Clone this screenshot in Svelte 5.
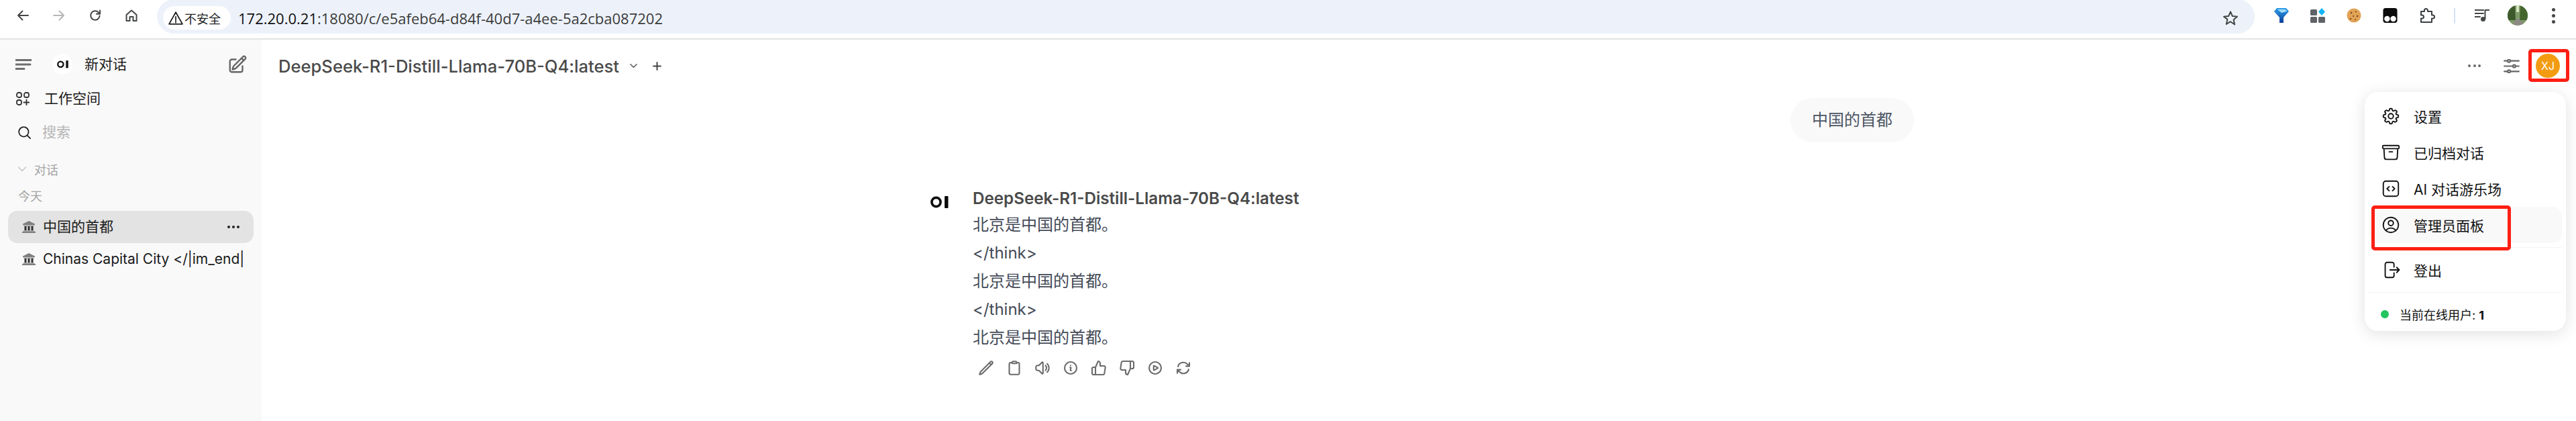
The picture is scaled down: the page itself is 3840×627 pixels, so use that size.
<script>
  const actions = [
    { d: 'M16.862 4.487l1.687-1.688a1.875 1.875 0 112.652 2.652L6.832 19.82a4.5 4.5 0 01-1.897 1.13l-2.685.8.8-2.685a4.5 4.5 0 011.13-1.897L16.863 4.487zm0 0L19.5 7.125' },
    { d: 'M15.666 3.888A2.25 2.25 0 0013.5 2.25h-3c-1.03 0-1.9.693-2.166 1.638m7.332 0c.055.194.084.4.084.612v0a.75.75 0 01-.75.75H9a.75.75 0 01-.75-.75v0c0-.212.03-.418.084-.612m7.332 0c.646.049 1.288.11 1.927.184 1.1.128 1.907 1.077 1.907 2.185V19.5a2.25 2.25 0 01-2.25 2.25H6.75A2.25 2.25 0 014.5 19.5V6.257c0-1.108.806-2.057 1.907-2.185a48.208 48.208 0 011.927-.184' },
    { d: 'M19.114 5.636a9 9 0 010 12.728M16.463 8.288a5.25 5.25 0 010 7.424M6.75 8.25l4.72-4.72a.75.75 0 011.28.53v15.88a.75.75 0 01-1.28.53l-4.72-4.72H4.51c-.88 0-1.704-.507-1.938-1.354A9.01 9.01 0 012.25 12c0-.83.112-1.633.322-2.396C2.806 8.756 3.63 8.25 4.51 8.25H6.75z' },
    { d: 'M11.25 11.25l.041-.02a.75.75 0 011.063.852l-.708 2.836a.75.75 0 001.063.853l.041-.021M21 12a9 9 0 11-18 0 9 9 0 0118 0zm-9-3.75h.008v.008H12V8.25z' },
    { d: 'M14 9V5a3 3 0 0 0-3-3l-4 9v11h11.28a2 2 0 0 0 2-1.7l1.38-9a2 2 0 0 0-2-2.3zM7 22H4a2 2 0 0 1-2-2v-7a2 2 0 0 1 2-2h3' },
    { d: 'M10 15v4a3 3 0 0 0 3 3l4-9V2H5.72a2 2 0 0 0-2 1.7l-1.38 9a2 2 0 0 0 2 2.3zm7-13h2.67A2.31 2.31 0 0 1 22 4v7a2.31 2.31 0 0 1-2.33 2H17' },
    { d: 'M21 12a9 9 0 11-18 0 9 9 0 0118 0zM15.91 11.672a.375.375 0 010 .656l-5.603 3.113a.375.375 0 01-.557-.328V8.887c0-.286.307-.466.557-.327l5.603 3.112z' },
    { d: 'M16.023 9.348h4.992v-.001M2.985 19.644v-4.992m0 0h4.992m-4.993 0l3.181 3.183a8.25 8.25 0 0013.803-3.7M4.031 9.865a8.25 8.25 0 0113.803-3.7l3.181 3.182m0-4.991v4.99' }
  ];
  const menu = [
    { label: '设置', d: 'M10.343 3.94c.09-.542.56-.94 1.11-.94h1.093c.55 0 1.02.398 1.11.94l.149.894c.07.424.384.764.78.93.398.164.855.142 1.205-.108l.737-.527a1.125 1.125 0 011.45.12l.773.774c.39.389.44 1.002.12 1.45l-.527.737c-.25.35-.272.806-.107 1.204.165.397.505.71.93.78l.893.15c.543.09.94.56.94 1.109v1.094c0 .55-.397 1.02-.94 1.11l-.893.149c-.425.07-.765.383-.93.78-.165.398-.143.854.107 1.204l.527.738c.32.447.269 1.06-.12 1.45l-.774.773a1.125 1.125 0 01-1.449.12l-.738-.527c-.35-.25-.806-.272-1.203-.107-.397.165-.71.505-.781.929l-.149.894c-.09.542-.56.94-1.11.94h-1.094c-.55 0-1.019-.398-1.11-.94l-.148-.894c-.071-.424-.384-.764-.781-.93-.398-.164-.854-.142-1.204.108l-.738.527c-.447.32-1.06.269-1.45-.12l-.773-.774a1.125 1.125 0 01-.12-1.45l.527-.737c.25-.35.273-.806.108-1.204-.165-.397-.506-.71-.93-.78l-.894-.15c-.542-.09-.94-.56-.94-1.11v-1.094c0-.55.398-1.02.94-1.11l.894-.149c.424-.07.765-.383.93-.78.165-.398.143-.854-.107-1.204l-.527-.738a1.125 1.125 0 01.12-1.45l.773-.773a1.125 1.125 0 011.45-.12l.737.527c.35.25.807.272 1.204.107.397-.165.71-.505.78-.929l.15-.894zM15 12a3 3 0 11-6 0 3 3 0 016 0z' },
    { label: '已归档对话', d: 'M20.25 7.5l-.625 10.632a2.25 2.25 0 01-2.247 2.118H6.622a2.25 2.25 0 01-2.247-2.118L3.75 7.5M10 11.25h4M3.375 7.5h17.25c.621 0 1.125-.504 1.125-1.125v-1.5c0-.621-.504-1.125-1.125-1.125H3.375c-.621 0-1.125.504-1.125 1.125v1.5c0 .621.504 1.125 1.125 1.125z' },
    { label: 'AI 对话游乐场', d: 'M6 3h12a3 3 0 013 3v12a3 3 0 01-3 3H6a3 3 0 01-3-3V6a3 3 0 013-3zM10 9.500l-2.500 2.500 2.500 2.500M14 9.500l2.500 2.500-2.500 2.500' },
    { label: '管理员面板', hover: true, d: 'M17.982 18.725A7.488 7.488 0 0012 15.75a7.488 7.488 0 00-5.982 2.975m11.963 0a9 9 0 10-11.963 0m11.963 0A8.966 8.966 0 0112 21a8.966 8.966 0 01-5.982-2.275M15 9.75a3 3 0 11-6 0 3 3 0 016 0z' }
  ];
  const lines = ['北京是中国的首都。', '</think>', '北京是中国的首都。', '</think>', '北京是中国的首都。'];
  const title = 'DeepSeek-R1-Distill-Llama-70B-Q4:latest';
</script>

{#snippet ologo(size)}
  <svg class="ologo" width={size} viewBox="0 0 27 18" aria-hidden="true">
    <circle cx="8.5" cy="9" r="6.6" fill="none" stroke="currentColor" stroke-width="3.6" />
    <rect x="22" y="0.5" width="4" height="17" fill="currentColor" />
  </svg>
{/snippet}

{#snippet bank()}
  <svg class="bank" viewBox="0 0 20 18" aria-hidden="true">
    <path d="M10 0 L19 4.5 V6 H1 V4.5 Z" fill="#7f7f7f" />
    <rect x="2" y="6.5" width="16" height="1.5" fill="#a0a0a0" />
    <rect x="3.5" y="8" width="3" height="6.5" fill="#2e2e2e" />
    <rect x="8.5" y="8" width="3" height="6.5" fill="#2e2e2e" />
    <rect x="13.5" y="8" width="3" height="6.5" fill="#2e2e2e" />
    <rect x="1.5" y="14.5" width="17" height="1.5" fill="#a0a0a0" />
    <rect x="0" y="16" width="20" height="2" fill="#7f7f7f" />
  </svg>
{/snippet}

<div class="app">
  <header class="chrome">
    <nav class="nav">
      <svg viewBox="0 0 20 20"><path d="M18 10H3M9.5 3.5 3 10l6.5 6.5" /></svg>
      <svg class="off" viewBox="0 0 20 20"><path d="M2 10h15M10.5 3.5 17 10l-6.5 6.5" /></svg>
      <svg viewBox="0 0 20 20"><path d="M16.5 10.5a6.7 6.7 0 1 1-1.9-5.2L17 7.6M17 2.5v5.2h-5.2" /></svg>
      <svg viewBox="0 0 20 20"><path d="M2.5 9 10 2.5 17.5 9v9h-5v-6h-5v6h-5z" /></svg>
    </nav>
    <div class="omni">
      <div class="chip">
        <svg viewBox="0 0 20 20"><path d="M10 2 19 18H1zM10 8v5M10 14.5v1.6" /></svg>
        <span>不安全</span>
      </div>
      <div class="url"><b>172.20.0.21</b>:18080/c/e5afeb64-d84f-40d7-a4ee-5a2cba087202</div>
      <svg class="star" viewBox="0 0 24 24"><path d="M12 2.5l2.9 6.6 7.1.7-5.4 4.7 1.6 7L12 17.2l-6.2 3.7 1.6-7L2 9.800l7.100-.7z" /></svg>
    </div>
    <div class="exts">
      <svg class="ext" viewBox="0 0 22 22">
        <defs><linearGradient id="fnl" x1="0" y1="0" x2="0" y2="1"><stop offset="0" stop-color="#2f9fe8" /><stop offset="1" stop-color="#0a3f9a" /></linearGradient></defs>
        <path d="M4 0h14l4 5-8 9v8h-6v-8L0 5z" fill="url(#fnl)" />
        <path d="M5 2h12l2 3-8 2z" fill="#9fdcf8" />
      </svg>
      <svg class="ext" viewBox="0 0 22 22">
        <rect x="0" y="2" width="10" height="9" rx="1.500" fill="#5f6368" />
        <rect x="0" y="13" width="10" height="9" rx="1.500" fill="#5f6368" />
        <rect x="12" y="13" width="10" height="9" rx="1.500" fill="#5f6368" />
        <path d="M17 0l5 5.500-5 5.500-5-5.500z" fill="#12b5f5" />
      </svg>
      <svg class="ext" viewBox="0 0 22 22">
        <circle cx="11" cy="11" r="10.500" fill="#e2a355" />
        <g fill="#7a4a1c"><circle cx="7" cy="7" r="1.300" /><circle cx="14" cy="5.500" r="1.100" /><circle cx="16" cy="12" r="1.300" /><circle cx="10" cy="12" r="1.100" /><circle cx="6" cy="16" r="1.300" /><circle cx="13" cy="17" r="1.100" /></g>
      </svg>
      <svg class="ext" viewBox="0 0 24 24">
        <rect x="0.500" y="0" width="23" height="24" rx="4" fill="#0b0b0b" />
        <circle cx="7" cy="17.500" r="4.600" fill="#fff" /><circle cx="17" cy="17.500" r="4.600" fill="#fff" />
      </svg>
      <svg class="ext puzzle" viewBox="0 0 24 24">
        <path d="M3 6h5V4.500a2.500 2.500 0 0 1 5 0V6h6v5.500h1.500a2.500 2.500 0 0 1 0 5H19V22H3v-5.500h1.500a2.500 2.500 0 0 0 0-5H3z" />
      </svg>
      <i class="sep"></i>
      <svg class="ext media" viewBox="0 0 22 22">
        <path d="M0 3h13M0 8h13M0 13h8" />
        <path class="note" d="M15.500 3h6M15.500 3v13" />
        <circle cx="12.500" cy="16.500" r="3.500" />
      </svg>
      <svg class="profile" viewBox="0 0 30 30">
        <defs><clipPath id="pc"><circle cx="15" cy="15" r="15" /></clipPath></defs>
        <g clip-path="url(#pc)">
          <rect width="30" height="30" fill="#7f9b6a" />
          <path d="M0 0h11l1 22H0z" fill="#3d5a2c" />
          <path d="M30 0H19l-1 22h12z" fill="#46662f" />
          <path d="M13 0h4v10h-4z" fill="#d6e4c4" />
          <path d="M13 20h4l9 10H6z" fill="#8d8a86" />
        </g>
      </svg>
      <div class="kebab"><i></i><i></i><i></i></div>
    </div>
  </header>

  <main class="main">
    <aside class="side">
      <div class="row top">
        <svg class="menu-ico" viewBox="0 0 24 16"><path d="M0 1.500h24M0 8h22M0 14.500h13" /></svg>
        <div class="logo-c">{@render ologo(17)}</div>
        <span class="t21">新对话</span>
        <svg class="edit" viewBox="0 0 24 24"><path d="M16.862 4.487l1.687-1.688a1.875 1.875 0 112.652 2.652L10.582 16.07a4.5 4.5 0 01-1.897 1.13L6 18l.8-2.685a4.5 4.5 0 011.13-1.897l8.932-8.931zm0 0L19.5 7.125M18 14v4.750A2.250 2.250 0 0115.750 21H5.250A2.250 2.250 0 013 18.750V8.250A2.250 2.250 0 015.250 6H10" /></svg>
      </div>
      <div class="row work">
        <svg class="wk" viewBox="0 0 20 20">
          <rect x="1" y="1" width="7" height="7" rx="2.800" /><rect x="12" y="1" width="7" height="7" rx="2.800" /><rect x="1" y="12" width="7" height="7" rx="2.800" />
          <path d="M15.500 11.500v8M11.500 15.500h8" />
        </svg>
        <span class="t21">工作空间</span>
      </div>
      <div class="row search">
        <svg class="sr" viewBox="0 0 20 20"><circle cx="8.800" cy="8.800" r="7.600" /><path d="M14.300 14.300 19 19" /></svg>
        <span class="t21 ph">搜索</span>
      </div>
      <div class="row group">
        <svg class="chev" viewBox="0 0 12 8"><path d="M0.500 1 6 6.500 11.500 1" /></svg>
        <span>对话</span>
      </div>
      <div class="today">今天</div>
      <div class="chat active">
        {@render bank()}
        <span class="t21 nm">中国的首都</span>
        <div class="dots"><i></i><i></i><i></i></div>
      </div>
      <div class="chat">
        {@render bank()}
        <span class="t21 nm">Chinas Capital City &lt;/|im_end|</span>
      </div>
    </aside>

    <section class="content">
      <div class="bar">
        <span class="title">{title}</span>
        <svg class="tchev" viewBox="0 0 12 8"><path d="M1 1.500 6 6.500 11 1.500" /></svg>
        <svg class="tplus" viewBox="0 0 12 12"><path d="M6 1v10M1 6h10" /></svg>
        <div class="bar-right">
          <div class="hdots"><i></i><i></i><i></i></div>
          <svg class="sliders" viewBox="3 4 18 16"><path d="M10.500 6h9.750M10.500 6a1.500 1.500 0 1 1-3 0m3 0a1.500 1.500 0 1 0-3 0M3.750 6H7.500m3 12h9.750m-9.750 0a1.500 1.500 0 0 1-3 0m3 0a1.500 1.500 0 0 0-3 0m-3.750 0H7.500m9-6h3.750m-3.750 0a1.500 1.500 0 0 1-3 0m3 0a1.500 1.500 0 0 0-3 0m-9.750 0h9.750" /></svg>
          <div class="avatar">XJ</div>
        </div>
      </div>
      <div class="chatcol">
        <div class="bubble">中国的首都</div>
        <div class="msg">
          <div class="msg-logo">{@render ologo(27)}</div>
          <div class="msg-body">
            <div class="name">{title}</div>
            {#each lines as l}
              <p>{l}</p>
            {/each}
            <div class="acts">
              {#each actions as a}
                <svg viewBox="0 0 24 24"><path d={a.d} /></svg>
              {/each}
            </div>
          </div>
        </div>
      </div>
    </section>

    <div class="dd">
      {#each menu as m}
        <div class="item" class:hover={m.hover}>
          <svg viewBox="0 0 24 24"><path d={m.d} /></svg>
          <span>{m.label}</span>
        </div>
      {/each}
      <hr />
      <div class="item">
        <svg viewBox="0 0 24 24"><path d="M15.750 8.500V5.250A2.250 2.250 0 0013.500 3h-6a2.250 2.250 0 00-2.250 2.250v13.500A2.250 2.250 0 007.500 21h6a2.250 2.250 0 002.250-2.250V15.500M11 12h11M19 9l3 3-3 3" /></svg>
        <span>登出</span>
      </div>
      <hr />
      <div class="online"><i></i><span>当前在线用户: <b>1</b></span></div>
    </div>

    <div class="mark mark-avatar"></div>
    <div class="mark mark-admin"></div>
  </main>
</div>

<style>
  :global(body) { margin: 0; background: #fff; }
  .app {
    width: 3840px; height: 627px; overflow: hidden; display: flex; flex-direction: column;
    font-family: Inter, "Noto Sans CJK SC", sans-serif; color: #111; background: #fff; position: relative;
  }
  svg { flex: none; display: block; fill: none; stroke: currentColor; stroke-linecap: round; stroke-linejoin: round; }

  .chrome { height: 57px; flex: none; display: flex; align-items: center; border-bottom: 2px solid #e3e3e3; background: #fff; overflow: hidden; box-sizing: content-box; padding-left: 24px; }
  .nav { display: flex; gap: 34px; align-items: center; color: #444746; margin-top: -11px; }
  .nav svg { width: 20px; height: 20px; stroke-width: 2; }
  .nav .off { color: #b4b6b8; }
  .omni { flex: 1; height: 51px; margin: -9px 29px 0 28px; background: #edf2fa; border-radius: 26px; display: flex; align-items: center; padding: 0 24px 0 9px; }
  .chip { width: 101px; height: 35px; box-sizing: border-box; padding-left: 8px; margin-top: 5px; background: #fff; border-radius: 18px; display: flex; align-items: center; gap: 2px; font-size: 18px; color: #222; font-family: "Noto Sans CJK SC", sans-serif; }
  .chip svg { width: 22px; height: 22px; stroke-width: 1.600; }
  .url { margin-left: 11px; margin-top: 5px; font: 22px/1 "Open Sans", sans-serif; color: #3c3c3c; flex: 1; white-space: nowrap; }
  .url b { font-weight: 400; color: #111; }
  .star { width: 24px; height: 24px; stroke-width: 2; color: #444746; margin-top: 5px; }
  .exts { display: flex; align-items: center; padding-right: 30px; margin-top: -11px; }
  .ext { width: 22px; height: 22px; stroke: none; margin-right: 32px; }
  .puzzle { fill: none; stroke: #3c4043; stroke-width: 2; width: 24px; height: 24px; margin-right: 28px; }
  .sep { width: 2px; height: 23px; background: #d3e3fd; margin-right: 29px; }
  .media { stroke: #444746; stroke-width: 2; margin-right: 27px; fill: none; }
  .media circle { fill: #444746; stroke: none; }
  .profile { width: 30px; height: 30px; stroke: none; margin-right: 36px; }
  .kebab { width: 6px; display: flex; flex-direction: column; gap: 4px; }
  .kebab i { width: 5px; height: 5px; border-radius: 50%; background: #444746; }

  .main { flex: 1; min-height: 0; display: flex; position: relative; }

  .side { width: 390px; flex: none; background: #f9f9f9; display: flex; flex-direction: column; box-sizing: border-box; }
  .t21 { font-size: 21px; line-height: 30px; white-space: nowrap; }
  .row { display: flex; align-items: center; }
  .top { height: 30px; margin-top: 22px; padding-left: 23px; color: #1a1a1a; }
  .menu-ico { width: 24px; height: 16px; stroke: #6f6f6f; stroke-width: 3; margin-right: 31px; }
  .logo-c { width: 30px; height: 30px; border-radius: 50%; background: #fff; display: flex; align-items: center; justify-content: center; margin-right: 18px; color: #111; }
  .edit { width: 30px; height: 30px; margin-left: auto; margin-right: 21px; stroke: #666; stroke-width: 1.900; }
  .work { height: 30px; margin-top: 21px; padding-left: 24px; gap: 22px; color: #1a1a1a; }
  .wk { width: 20px; height: 20px; stroke: #333; stroke-width: 1.800; }
  .search { height: 30px; margin-top: 20px; padding-left: 27px; gap: 17px; }
  .sr { width: 19px; height: 19px; stroke: #222; stroke-width: 1.900; }
  .ph { color: #b5b5b5; }
  .group { height: 24px; margin-top: 28px; padding-left: 27px; gap: 12px; color: #a3a3a3; font-size: 18px; }
  .chev { width: 12px; height: 8px; stroke: #c4c4c4; stroke-width: 1.500; }
  .today { height: 24px; line-height: 24px; margin-top: 17px; padding-left: 27px; font-size: 18px; color: #a3a3a3; margin-bottom: 9px; }
  .chat { height: 48px; margin: 0 12px; box-sizing: border-box; padding-left: 21px; display: flex; align-items: center; border-radius: 14px; gap: 11px; color: #1a1a1a; width: 366px; flex: none; }
  .chat.active { background: #e3e3e3; }
  .bank { width: 20px; height: 18px; stroke: none; }
  .dots { display: flex; gap: 2.500px; margin-left: auto; margin-right: 21px; }
  .dots i { width: 4.500px; height: 4.500px; border-radius: 50%; background: #222; }

  .content { flex: 1; min-width: 0; display: flex; flex-direction: column; }
  .bar { height: 78px; flex: none; display: flex; align-items: center; padding-left: 25px; color: #4b5563; }
  .title { font-size: 25.6px; font-weight: 500; color: #4a4a4a; white-space: nowrap; }
  .tchev { width: 11px; height: 8px; stroke: #555; stroke-width: 1.600; margin-left: 16px; }
  .tplus { width: 13px; height: 13px; stroke: #444; stroke-width: 1.800; margin-left: 23px; }
  .bar-right { margin-left: auto; display: flex; align-items: center; padding-right: 24px; }
  .hdots { display: flex; gap: 3.500px; margin-right: 34px; }
  .hdots i { width: 4px; height: 4px; border-radius: 50%; background: #6a6a6a; }
  .sliders { width: 24px; height: 21px; stroke: #666; stroke-width: 1.700; margin-right: 24px; }
  .avatar { width: 36px; height: 36px; border-radius: 50%; background: #f39c12; color: #fff; font-size: 16px; display: flex; align-items: center; justify-content: center; }

  .chatcol { width: 1466px; margin-left: 997px; display: flex; flex-direction: column; }
  .bubble { align-self: flex-end; margin-top: 9px; height: 66px; line-height: 66px; padding: 0 32px; border-radius: 33px; background: #f9f9f9; font-size: 24px; color: #4b5563; }
  .msg { display: flex; gap: 36px; margin-top: 70px; }
  .msg-logo { width: 27px; color: #0a0a0a; padding-top: 10px; flex: none; }
  .msg-body { display: flex; flex-direction: column; }
  .name { font-size: 24.2px; line-height: 28px; font-weight: 600; color: #4a4a4a; margin-bottom: 4px; }
  .msg-body p { margin: 0; font-size: 24px; line-height: 42px; color: #434a57; }
  .acts { display: flex; gap: 18px; padding-left: 8px; margin-top: 12px; color: #6b6b6b; }
  .acts svg { width: 24px; height: 24px; stroke-width: 2.100; }

  .dd { position: absolute; left: 3525px; top: 78px; width: 300px; height: 356px; box-sizing: border-box; padding: 9px 6px 0; background: #fff; border-radius: 20px; box-shadow: 0 4px 24px rgba(0, 0, 0, 0.12); display: flex; flex-direction: column; }
  .item { height: 54px; flex: none; display: flex; align-items: center; gap: 19px; padding-left: 18px; border-radius: 14px; font-size: 21px; color: #111; white-space: nowrap; }
  .item.hover { background: #f9f9f9; }
  .item svg { width: 30px; height: 30px; stroke-width: 1.500; }
  hr { margin: 6px 0; border: 0; height: 1px; background: #f3f3f3; flex: none; }
  .online { display: flex; align-items: center; gap: 16px; padding-left: 18px; font-size: 18px; height: 54px; color: #111; }
  .online i { width: 12px; height: 12px; border-radius: 50%; background: #22c55e; flex: none; }
  .online b { font-weight: 700; }

  .mark { position: absolute; box-sizing: border-box; border: 5px solid #fe1f14; border-radius: 5px; }
  .mark-avatar { left: 3769px; top: 14px; width: 61px; height: 49px; }
  .mark-admin { left: 3535px; top: 247px; width: 208px; height: 67px; }
</style>
